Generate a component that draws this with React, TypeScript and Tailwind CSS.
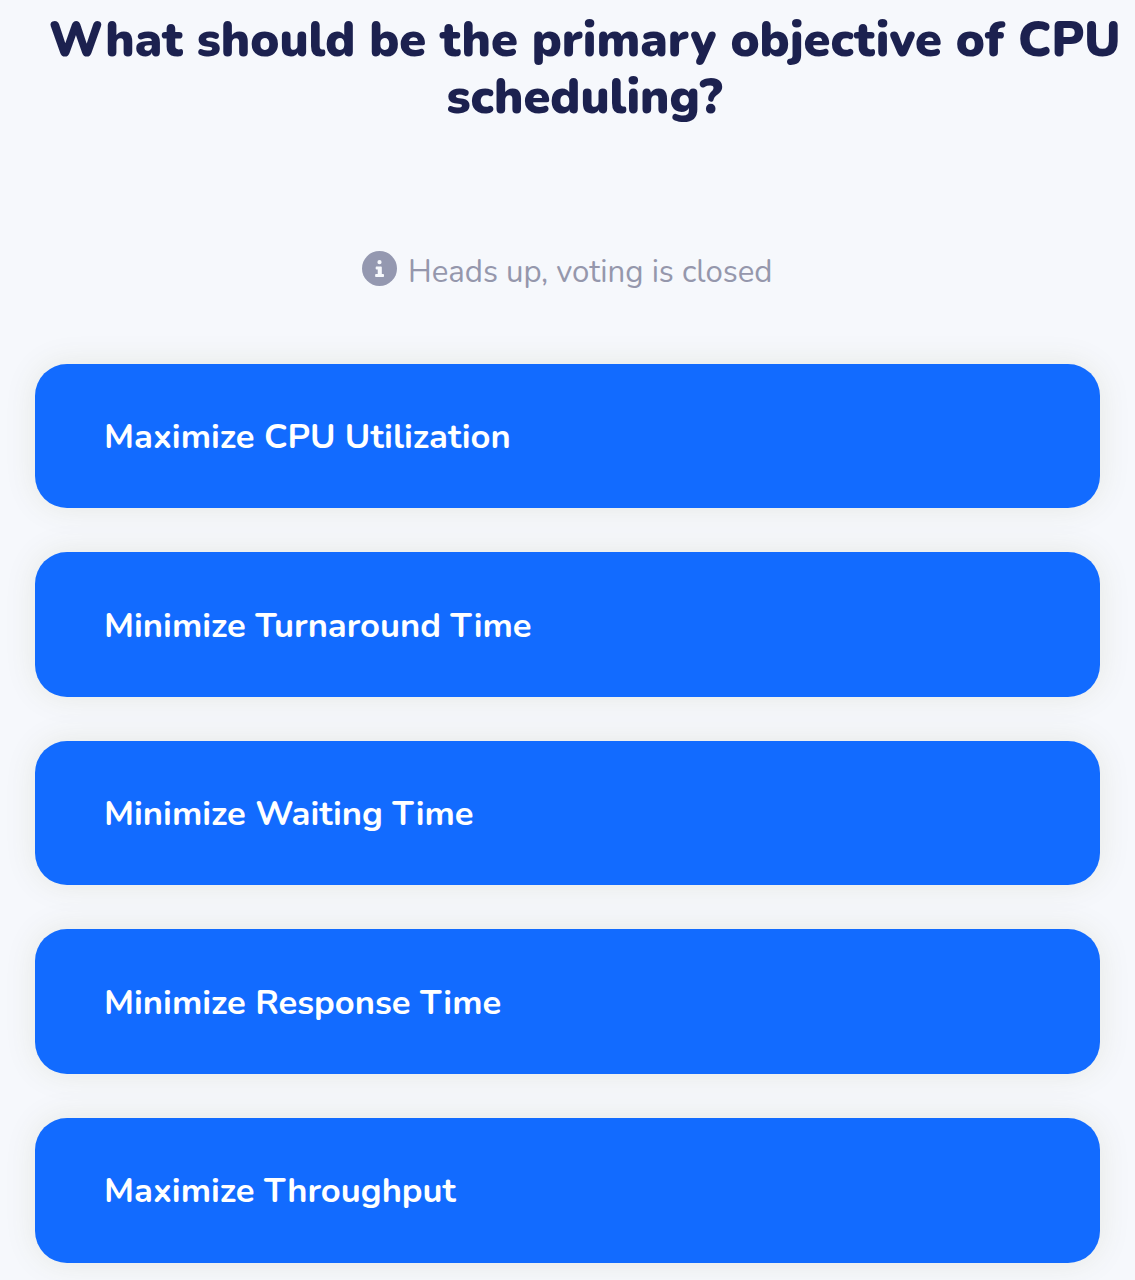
import React from "react";

const options = [
  "Maximize CPU Utilization",
  "Minimize Turnaround Time",
  "Minimize Waiting Time",
  "Minimize Response Time",
  "Maximize Throughput",
];

export default function App() {
  return (
    <main className="h-[1280px] w-[1135px] overflow-hidden bg-[#f6f8fc] font-['Nunito','Open_Sans',sans-serif]">
      <h1 className="h-[124px] pt-[12px] pl-[34px] text-center text-[48.5px] leading-[57px] font-black text-[#1c214f]">
        What should be the primary objective of CPU scheduling?
      </h1>
      <div className="mt-[127px] flex h-[40px] items-center pl-[362px] text-[31.2px] text-[#9597ac]">
        <svg width="35" height="35" viewBox="0 0 512 512" className="mr-[11px] mb-[5px] fill-[#9498b0]">
          <path d="M256 0a256 256 0 1 0 0 512a256 256 0 0 0 0-512z" />
          <path fill="#f6f8fc" d="M256 132a31 31 0 1 1 0 62a31 31 0 0 1 0-62zM212 228h66q12 0 12 12v98h20q12 0 12 12v20q0 12-12 12H204q-12 0-12-12v-20q0-12 12-12h26v-66h-18q-12 0-12-12v-20q0-12 12-12z" />
        </svg>
        <span className="pt-[2px]">Heads up, voting is closed</span>
      </div>
      <div className="mt-[72.6px] flex flex-col gap-[44px] px-[35px]">
        {options.map((label) => (
          <button
            key={label}
            className="flex h-[144.6px] items-center rounded-[32px] bg-[#126bff] pt-[2px] pl-[69px] text-left text-[34.6px] font-bold text-white shadow-[0_0_32px_rgba(90,90,20,0.1)]"
          >
            {label}
          </button>
        ))}
      </div>
    </main>
  );
}
